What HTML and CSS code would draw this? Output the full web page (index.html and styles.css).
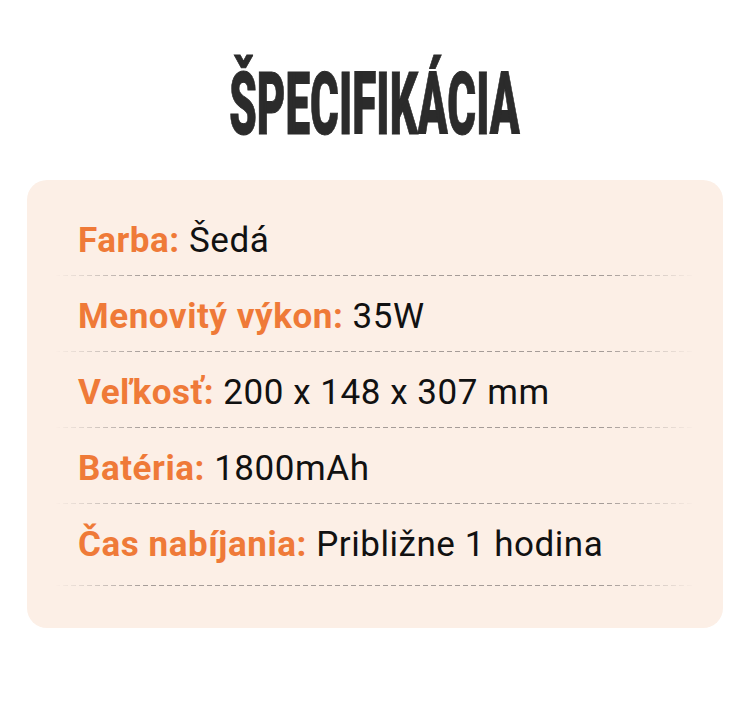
FILE: index.html
```html
<!DOCTYPE html>
<html lang="sk">
<head>
<meta charset="utf-8">
<link rel="stylesheet" href="styles.css">
</head>
<body>
<div class="page">
  <h1 class="title"><span class="title-text">ŠPECIFIKÁCIA</span></h1>
  <div class="card">
    <div class="row"><span class="label">Farba:</span> <span class="value">Šedá</span></div>
    <div class="row"><span class="label">Menovitý výkon:</span> <span class="value">35W</span></div>
    <div class="row"><span class="label">Veľkosť:</span> <span class="value">200 x 148 x 307 mm</span></div>
    <div class="row"><span class="label">Batéria:</span> <span class="value">1800mAh</span></div>
    <div class="row last"><span class="label">Čas nabíjania:</span> <span class="value">Približne 1 hodina</span></div>
  </div>
</div>
</body>
</html>
```
FILE: styles.css
```css
html, body {
  margin: 0;
  padding: 0;
  background: #ffffff;
}
.page {
  width: 750px;
  height: 716px;
  padding-top: 54px;
  box-sizing: border-box;
  font-family: Roboto, "Noto Sans", sans-serif;
}
.title {
  margin: 0;
  height: 126px;
  display: flex;
  justify-content: center;
  font-family: Roboto, "Liberation Sans", sans-serif;
  font-weight: 900;
  font-size: 88px;
  line-height: 100px;
  color: #2b2b2b;
}
.title-text {
  display: inline-block;
  transform: scaleX(0.5);
  transform-origin: center;
  white-space: nowrap;
  -webkit-text-stroke: 1px #2b2b2b;
}
.card {
  margin: 0 27px;
  background: #fcefe6;
  border-radius: 20px;
  padding: 20px 28px 42px;
}
.row {
  height: 76px;
  box-sizing: border-box;
  padding: 23px 0 0 23px;
  font-size: 35px;
  line-height: 36px;
  letter-spacing: 0.55px;
  white-space: nowrap;
  position: relative;
}
.row::after {
  content: "";
  position: absolute;
  left: 0;
  right: 0;
  bottom: 0;
  height: 1px;
  background: repeating-linear-gradient(to right, #a59c98 0 5px, transparent 5px 8px);
  -webkit-mask-image: linear-gradient(to right, transparent 0, #000 14%, #000 86%, transparent 100%);
  mask-image: linear-gradient(to right, transparent 0, #000 14%, #000 86%, transparent 100%);
}
.row.last {
  height: 82px;
}
.label {
  color: #ef7a38;
  font-weight: 700;
}
.value {
  color: #111111;
  font-weight: 400;
}
```
